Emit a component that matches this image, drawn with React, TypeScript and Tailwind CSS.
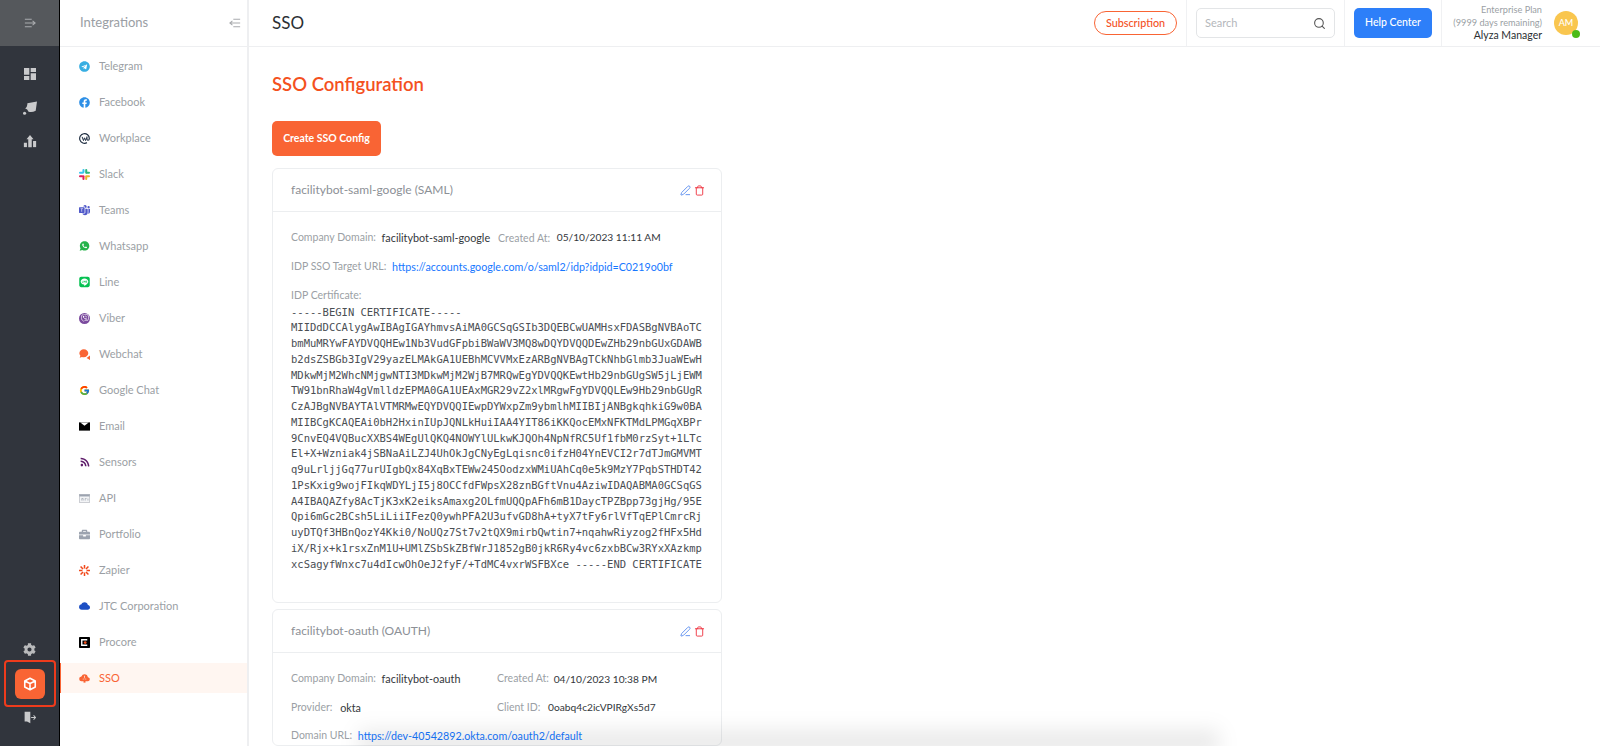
import React from "react";
import { Search, PenLine, Trash } from "lucide-react";
import {
  FaTelegram,
  FaFacebook,
  FaViber,
  FaRss,
  FaBriefcase,
  FaCog,
  FaLine,
} from "react-icons/fa";
import { IoLogoWhatsapp } from "react-icons/io";
import { BsMicrosoftTeams } from "react-icons/bs";
import { FcGoogle } from "react-icons/fc";
import { MdDashboard, MdCloud } from "react-icons/md";

const certLines = [
  "-----BEGIN CERTIFICATE-----",
  "MIIDdDCCAlygAwIBAgIGAYhmvsAiMA0GCSqGSIb3DQEBCwUAMHsxFDASBgNVBAoTC",
  "bmMuMRYwFAYDVQQHEw1Nb3VudGFpbiBWaWV3MQ8wDQYDVQQDEwZHb29nbGUxGDAWB",
  "b2dsZSBGb3IgV29yazELMAkGA1UEBhMCVVMxEzARBgNVBAgTCkNhbGlmb3JuaWEwH",
  "MDkwMjM2WhcNMjgwNTI3MDkwMjM2WjB7MRQwEgYDVQQKEwtHb29nbGUgSW5jLjEWM",
  "TW91bnRhaW4gVmlldzEPMA0GA1UEAxMGR29vZ2xlMRgwFgYDVQQLEw9Hb29nbGUgR",
  "CzAJBgNVBAYTAlVTMRMwEQYDVQQIEwpDYWxpZm9ybmlhMIIBIjANBgkqhkiG9w0BA",
  "MIIBCgKCAQEAi0bH2HxinIUpJQNLkHuiIAA4YIT86iKKQocEMxNFKTMdLPMGqXBPr",
  "9CnvEQ4VQBucXXBS4WEgUlQKQ4NOWYlULkwKJQOh4NpNfRC5Uf1fbM0rzSyt+1LTc",
  "El+X+Wzniak4jSBNaAiLZJ4UhOkJgCNyEgLqisnc0ifzH04YnEVCI2r7dTJmGMVMT",
  "q9uLrljjGq77urUIgbQx84XqBxTEWw245OodzxWMiUAhCq0e5k9MzY7PqbSTHDT42",
  "1PsKxig9wojFIkqWDYLjI5j8OCCfdFWpsX28znBGftVnu4AziwIDAQABMA0GCSqGS",
  "A4IBAQAZfy8AcTjK3xK2eiksAmaxg2OLfmUQQpAFh6mB1DaycTPZBpp73gjHg/95E",
  "Qpi6mGc2BCsh5LiLiiIFezQ0ywhPFA2U3ufvGD8hA+tyX7tFy6rlVfTqEPlCmrcRj",
  "uyDTQf3HBnQozY4Kki0/NoUQz7St7v2tQX9mirbQwtin7+nqahwRiyzog2fHFx5Hd",
  "iX/Rjx+k1rsxZnM1U+UMlZSbSkZBfWrJ1852gB0jkR6Ry4vc6zxbBCw3RYxXAzkmp",
  "xcSagyfWnxc7u4dIcwOhOeJ2fyF/+TdMC4vxrWSFBXce -----END CERTIFICATE",
];

function SlackIcon() {
  return (
    <svg viewBox="0 0 16 16" className="w-[11px] h-[11px]">
      <rect x="0" y="4" width="7" height="3" rx="1.5" fill="#36c5f0" />
      <rect x="5" y="0" width="3" height="6" rx="1.5" fill="#36c5f0" />
      <rect x="9" y="0" width="3" height="7" rx="1.5" fill="#2eb67d" />
      <rect x="10" y="4" width="6" height="3" rx="1.5" fill="#2eb67d" />
      <rect x="9" y="9" width="7" height="3" rx="1.5" fill="#ecb22e" />
      <rect x="9" y="10" width="3" height="6" rx="1.5" fill="#ecb22e" />
      <rect x="5" y="9" width="3" height="7" rx="1.5" fill="#e01e5a" />
      <rect x="0" y="9" width="6" height="3" rx="1.5" fill="#e01e5a" />
    </svg>
  );
}

function WorkplaceIcon() {
  return (
    <svg viewBox="0 0 16 16" className="w-[11px] h-[11px]" fill="none" stroke="#1c2b3f">
      <path d="M11.5 14A7 7 0 1 1 15 8c0 1.6-.8 2.6-1.9 2.6-1 0-1.6-.7-1.6-1.800V5" strokeWidth="1.7" />
      <path d="M4.5 5.5 6.5 11 8 7l1.5 4 1.5-4" strokeWidth="1.4" />
    </svg>
  );
}

function EmailIcon() {
  return (
    <svg viewBox="0 0 16 16" className="w-[11px] h-[11px]">
      <rect x="0" y="2" width="16" height="12" fill="#000" />
      <path d="M2 2 8 7l6-5" fill="#fff" />
    </svg>
  );
}

function ApiIcon() {
  return (
    <svg viewBox="0 0 16 16" className="w-[11px] h-[11px]">
      <rect x="0.5" y="2" width="15" height="12" fill="#f3f4f6" stroke="#b8bcc2" />
      <rect x="0.5" y="2" width="15" height="3" fill="#9ca3af" />
      <path d="M4 11V8h2v3M9 11V8h2M13 8v3" stroke="#9ca3af" fill="none" />
    </svg>
  );
}

function ProcoreIcon() {
  return (
    <svg viewBox="0 0 16 16" className="w-[11px] h-[11px]">
      <rect width="16" height="16" rx="1" fill="#000" />
      <path d="M12 4H4v8h8" stroke="#fff" strokeWidth="2" fill="none" />
      <circle cx="9" cy="8" r="2" fill="#f4511e" />
    </svg>
  );
}

function WebchatIcon() {
  return (
    <svg viewBox="0 0 16 16" className="w-[11px] h-[11px]">
      <path d="M7 0.500a6.500 5.800 0 0 1 6.500 5.800c0 3.200-2.900 5.800-6.500 5.800-1 0-1.900-.2-2.700-.6L1 12.800l1-2.900A5.600 5.600 0 0 1 .5 6.300 6.500 5.800 0 0 1 7 .5Z" fill="#f96434" />
      <path d="M16 9.500v6.500l-5-3Z" fill="#f96434" />
    </svg>
  );
}

function ZapierIcon() {
  return (
    <svg viewBox="0 0 16 16" className="w-[11px] h-[11px]" fill="none" stroke="#f1481a" strokeWidth="2.200">
      <path d="M8 0v5M8 11v5M0 8h5M11 8h5M2.300 2.300l3.500 3.500M10.200 10.200l3.500 3.500M13.700 2.300l-3.500 3.500M5.800 10.200l-3.500 3.500" />
    </svg>
  );
}

function ViberIcon() {
  return (
    <span className="w-[11px] h-[11px] rounded-full bg-[#7b4b9e] flex items-center justify-center">
      <FaViber size={8} color="#fff" />
    </span>
  );
}

function SsoIcon() {
  return (
    <svg viewBox="0 0 16 16" className="w-[11px] h-[11px]">
      <path d="M4 12a3.500 3.500 0 0 1-.5-7A5 5 0 0 1 13 6a3 3 0 0 1-.5 6Z" fill="#f96434" />
      <path d="M8 4v3M5.500 9h5M6 13h4" stroke="#fff" strokeWidth="1" />
      <rect x="6.500" y="9" width="3" height="5" fill="#f96434" />
    </svg>
  );
}

const items: { name: string; icon: React.ReactNode }[] = [
  { name: "Telegram", icon: <FaTelegram size={11} color="#37aee2" /> },
  { name: "Facebook", icon: <FaFacebook size={11} color="#2d8fe6" /> },
  { name: "Workplace", icon: <WorkplaceIcon /> },
  { name: "Slack", icon: <SlackIcon /> },
  { name: "Teams", icon: <BsMicrosoftTeams size={11} color="#5059c9" /> },
  { name: "Whatsapp", icon: <IoLogoWhatsapp size={12} color="#25b34a" /> },
  { name: "Line", icon: <FaLine size={12} color="#06c152" /> },
  { name: "Viber", icon: <ViberIcon /> },
  { name: "Webchat", icon: <WebchatIcon /> },
  { name: "Google Chat", icon: <FcGoogle size={11} /> },
  { name: "Email", icon: <EmailIcon /> },
  { name: "Sensors", icon: <FaRss size={10} color="#5f1d6b" /> },
  { name: "API", icon: <ApiIcon /> },
  { name: "Portfolio", icon: <FaBriefcase size={11} color="#9ca3af" /> },
  { name: "Zapier", icon: <ZapierIcon /> },
  { name: "JTC Corporation", icon: <MdCloud size={12} color="#1d4fc4" /> },
  { name: "Procore", icon: <ProcoreIcon /> },
  { name: "SSO", icon: <SsoIcon /> },
];

function Label({ children }: { children: React.ReactNode }) {
  return <span className="text-[#9b9fa5] text-[10.500px]">{children}:&nbsp;</span>;
}

function CardHeader({ title }: { title: string }) {
  return (
    <div className="h-[43px] px-[18px] flex items-center justify-between border-b border-[#eceef0]">
      <span className="text-[12px] text-[#8c9096]">{title}</span>
      <span className="flex items-center gap-[3px] -mr-[2px]">
        <PenLine size={11} color="#5b8def" />
        <Trash size={11} color="#ef3340" />
      </span>
    </div>
  );
}

export default function App() {
  return (
    <div className="h-screen w-full flex overflow-hidden bg-white text-[11px] font-['Lato',sans-serif]">
      {/* icon rail */}
      <div className="w-[60px] shrink-0 flex flex-col bg-[#31353d] border-r border-black">
        <div className="h-[46px] bg-[#55585c] flex items-center justify-center shrink-0">
          <svg viewBox="0 0 14 14" className="w-[12px] h-[12px]" fill="none" stroke="#a9abae" strokeWidth="1.200">
            <path d="M1 2.500h8M1 7h12M1 11.500h8M10 4.500 13 7l-3 2.500" />
          </svg>
        </div>
        <div className="flex flex-col items-center gap-[19px] pt-[20px]">
          <MdDashboard size={16} color="#c9cacc" />
          <svg viewBox="0 0 16 16" className="w-[14px] h-[14px]" fill="#c9cacc">
            <path d="M5 2.500 16 .5 14.500 11c-3 1.800-6 2-8.500 1-.5-2-1.500-3-3.500-3.500C4.500 7 5 5 5 2.500Z" />
            <circle cx="1.800" cy="14" r="1.800" />
          </svg>
          <svg viewBox="0 0 16 16" className="w-[14px] h-[14px]" fill="#c9cacc">
            <path d="M8 1 12 6H10V15H6V6H4Z" />
            <rect x="1" y="10" width="3.500" height="5" />
            <rect x="11.500" y="8" width="3.500" height="7" />
          </svg>
        </div>
        <div className="mt-auto flex flex-col items-center pb-[22px]">
          <FaCog size={13} color="#b9babc" className="mb-[4px]" />
          <div className="w-[52px] h-[47px] border-2 border-[#ee3b1c] rounded-[4px] flex items-center justify-center">
            <div className="w-[30px] h-[30px] bg-[#f96434] rounded-[6px] flex items-center justify-center">
              <svg viewBox="0 0 16 16" className="w-[14px] h-[14px]" fill="none" stroke="#fff" strokeWidth="1.800" strokeLinejoin="round">
                <path d="M8 1.500 14 4.500v7L8 14.500 2 11.500v-7ZM2 4.500 8 7.500l6-3M8 7.500v7" />
              </svg>
            </div>
          </div>
          <svg viewBox="0 0 16 16" className="w-[13px] h-[13px] mt-[4px]">
            <path d="M2 1h7v14l-4-2H2Z" fill="#c9cacc" />
            <path d="M10 8h5M13 5.500 15.500 8 13 10.500" stroke="#c9cacc" strokeWidth="1.300" fill="none" />
          </svg>
        </div>
      </div>

      {/* integrations list */}
      <div className="w-[189px] shrink-0 flex flex-col border-r-2 border-[#eeeff1]">
        <div className="h-[47px] shrink-0 pl-[20px] pr-[4px] pb-[1px] flex items-center justify-between border-b border-[#eeeff1] -mr-[2px]">
          <span className="text-[13px] text-[#9a9ea4]">Integrations</span>
          <svg viewBox="0 0 14 14" className="w-[12px] h-[12px] mr-[4px]" fill="none" stroke="#a9abae" strokeWidth="1.200">
            <path d="M5 2.500h8M1 7h12M5 11.500h8M4 4.500 1 7l3 2.500" />
          </svg>
        </div>
        <div className="flex flex-col pt-[1px]">
          {items.map((item) => (
            <div
              key={item.name}
              className={
                item.name === "SSO"
                  ? "h-[36px] flex items-center pl-[19px] text-[#f96434] relative"
                  : "h-[36px] flex items-center pl-[19px] text-[#9b9fa5]"
              }
            >
              {item.name === "SSO" && (
                <span className="absolute left-0 right-0 top-[3px] bottom-[3px] bg-[#fff6f1] border-l border-[#f96434]" />
              )}
              <span className="relative w-[11px] flex justify-center mr-[9px]">{item.icon}</span>
              <span className="relative">{item.name}</span>
            </div>
          ))}
        </div>
      </div>

      {/* main */}
      <div className="flex-1 min-w-0 flex flex-col relative">
        <div className="h-[47px] shrink-0 flex items-center border-b border-[#eeeff1] pl-[23px]">
          <span className="text-[17px] text-[#2b2f33]">SSO</span>
          <div className="ml-auto flex items-stretch h-full">
            <div className="flex items-center pr-[9px] border-r border-[#f0f1f3]">
              <span className="h-[24px] w-[83px] rounded-full border border-[#f96434] text-[#f4511e] text-[10.800px] font-medium flex items-center justify-center">
                Subscription
              </span>
            </div>
            <div className="flex items-center px-[9px] border-r border-[#f0f1f3]">
              <div className="w-[139px] h-[30px] border border-[#e3e5e7] rounded-[5px] flex items-center justify-between px-[8px]">
                <span className="text-[#b4b7bb]">Search</span>
                <Search size={13} color="#555" />
              </div>
            </div>
            <div className="flex items-center px-[9px] border-r border-[#f0f1f3]">
              <span className="w-[78px] h-[30px] rounded-[5px] bg-[#2d7ff9] text-white text-[10.500px] font-medium flex items-center justify-center">
                Help Center
              </span>
            </div>
            <div className="w-[158px] flex items-center pl-[0px] pr-[22px] justify-end relative">
              <div className="text-right leading-[12.500px] pr-[12px]">
                <div className="text-[9.200px] text-[#9b9fa5]">Enterprise Plan</div>
                <div className="text-[9.200px] text-[#9b9fa5]">(9999 days remaining)</div>
                <div className="text-[10.500px] text-[#2b2f33]">Alyza Manager</div>
              </div>
              <div className="w-[24px] h-[24px] rounded-full bg-[#f9c64f] text-white text-[9px] font-medium flex items-center justify-center relative">
                AM
                <span className="absolute -right-[2px] -bottom-[3px] w-[8px] h-[8px] rounded-full bg-[#4cbb17]" />
              </div>
            </div>
          </div>
        </div>

        <div className="flex-1 overflow-hidden pl-[23px] pt-[25px]">
          <h1 className="text-[18.500px] leading-[24px] font-semibold text-[#f4511e]">SSO Configuration</h1>
          <button className="mt-[25px] w-[109px] h-[35px] rounded-[5px] bg-[#f96434] text-white text-[10.500px] font-bold block">
            Create SSO Config
          </button>
          <div className="w-[450px] mt-[12px] border border-[#eceef0] rounded-[6px]">
            <CardHeader title="facilitybot-saml-google (SAML)" />
            <div className="pl-[18px] pt-[17px] pb-[30px]">
              <div className="h-[18px] flex items-center">
                <Label>Company Domain</Label>
                <span className="text-[#33373b] text-[10.800px] ml-[3px]">facilitybot-saml-google</span>
                <span className="ml-[8px]"><Label>Created At</Label></span>
                <span className="text-[#33373b] text-[10.200px] ml-[4px]">05/10/2023 11:11 AM</span>
              </div>
              <div className="h-[18px] mt-[11px] flex items-center">
                <Label>IDP SSO Target URL</Label>
                <span className="text-[#1677ff] text-[10.700px] ml-[3px]">https://accounts.google.com/o/saml2/idp?idpid=C0219o0bf</span>
              </div>
              <div className="h-[17px] mt-[11.500px] flex items-center">
                <Label>IDP Certificate</Label>
              </div>
              <div className="font-['DejaVu_Sans_Mono',monospace] text-[10.500px] leading-[15.750px] text-[#4a4e53] whitespace-pre">
                {certLines.map((line) => (
                  <div key={line}>{line}</div>
                ))}
              </div>
            </div>
          </div>
          <div className="w-[450px] mt-[6px] border border-[#eceef0] rounded-[6px]">
            <CardHeader title="facilitybot-oauth (OAUTH)" />
            <div className="pl-[18px] pt-[17px] grid grid-cols-[206px_1fr] gap-y-[10.500px]">
              <div className="h-[18px] flex items-center">
                <Label>Company Domain</Label>
                <span className="text-[#33373b] text-[10.800px] ml-[3px]">facilitybot-oauth</span>
              </div>
              <div className="h-[18px] flex items-center">
                <Label>Created At</Label>
                <span className="text-[#33373b] text-[10.200px] ml-[2px]">04/10/2023 10:38 PM</span>
              </div>
              <div className="h-[18px] flex items-center">
                <Label>Provider</Label>
                <span className="text-[#33373b] text-[10.800px] ml-[5px]">okta</span>
              </div>
              <div className="h-[18px] flex items-center">
                <Label>Client ID</Label>
                <span className="text-[#33373b] text-[10.200px] ml-[5px]">0oabq4c2icVPIRgXs5d7</span>
              </div>
              <div className="h-[18px] flex items-center col-span-2">
                <Label>Domain URL</Label>
                <span className="text-[#1677ff] text-[10.700px] ml-[3px]">https://dev-40542892.okta.com/oauth2/default</span>
              </div>
            </div>
          </div>
        </div>
        {/* soft shadow along the bottom edge */}
        <div className="absolute -bottom-[4px] left-[110px] w-[860px] h-[26px] bg-gradient-to-t from-black/15 to-transparent blur-[10px]" />
      </div>
    </div>
  );
}
